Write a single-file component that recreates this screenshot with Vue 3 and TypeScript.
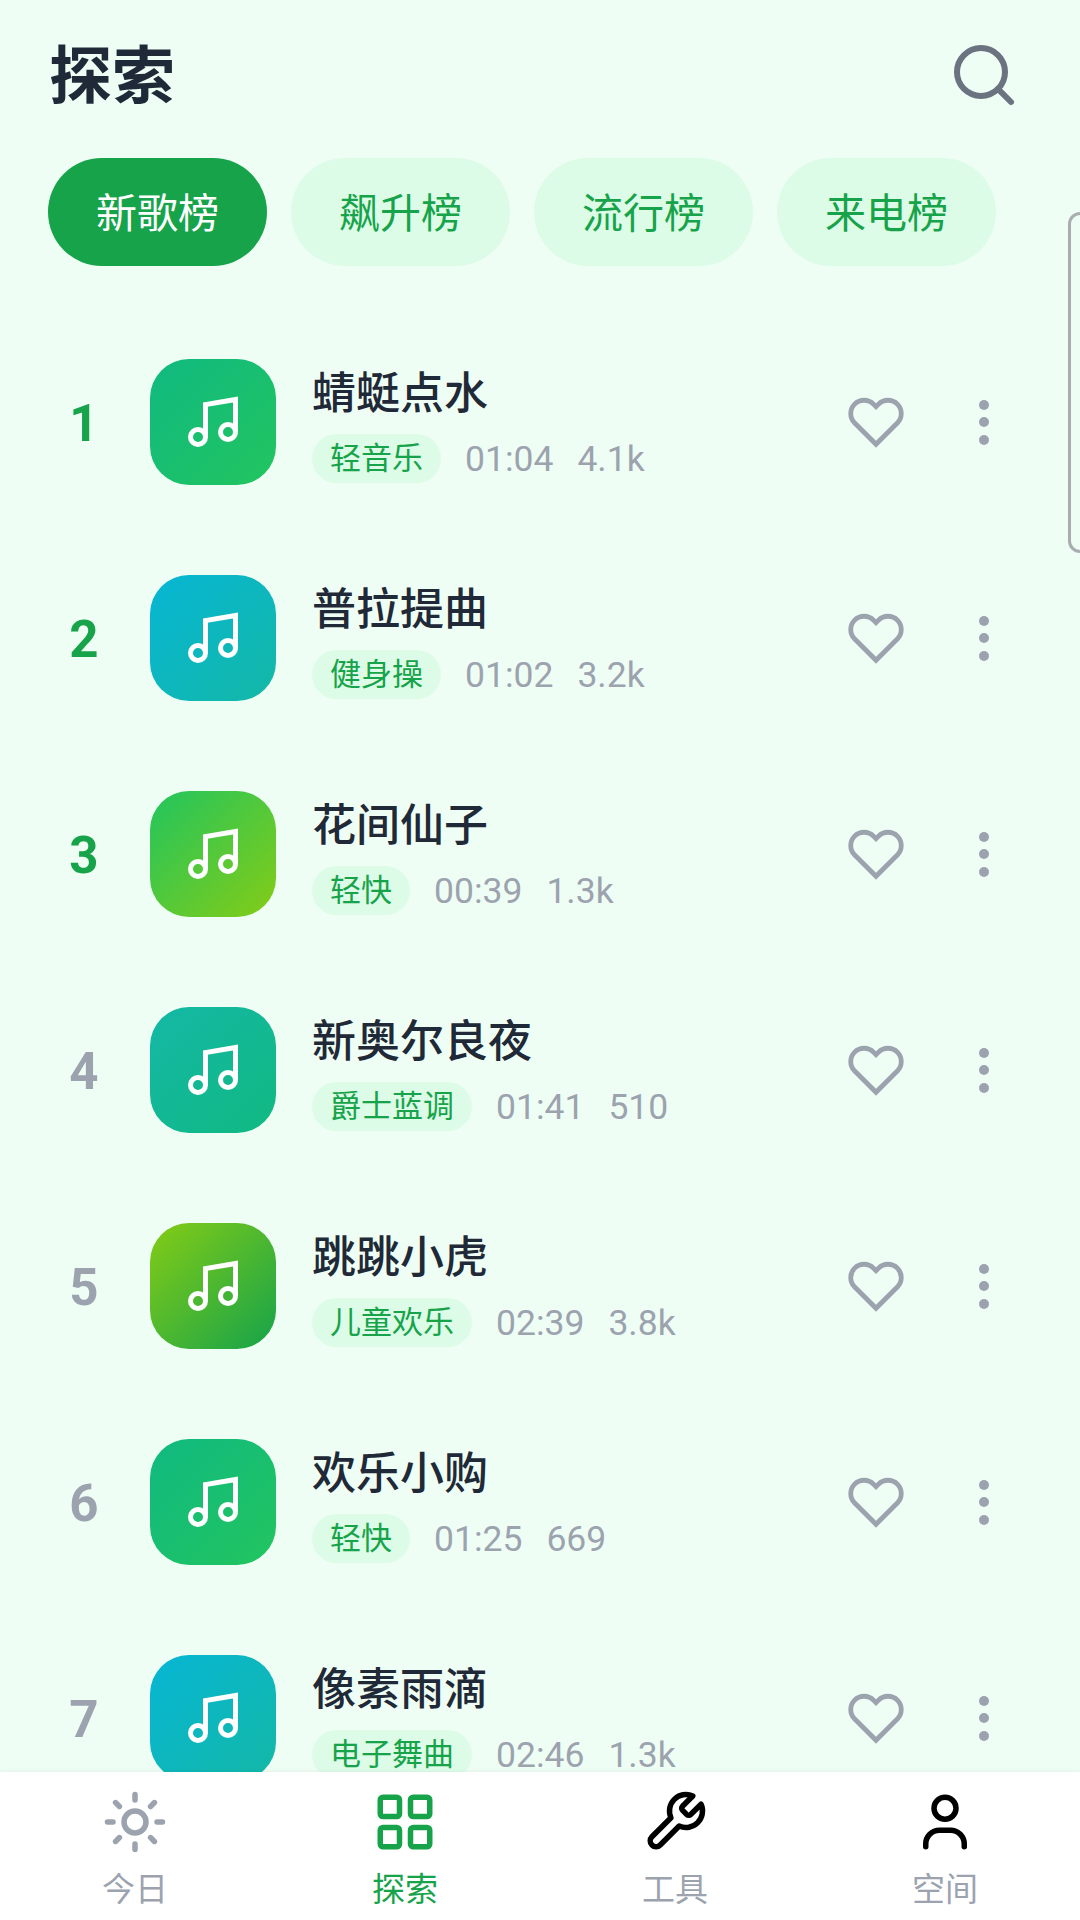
<template>
  <div class="page">
    <header class="top">
      <h1>探索</h1>
      <svg class="search" viewBox="0 0 24 24"><circle cx="11" cy="11" r="8" /><path d="M21 21l-4.35-4.35" /></svg>
    </header>

    <div class="tabs">
      <span v-for="(t, i) in tabs" :key="t" class="tab" :class="{ active: i === 0 }">{{ t }}</span>
    </div>

    <main class="list">
      <div v-for="(s, i) in songs" :key="s.title" class="row">
        <div class="rank" :class="{ hot: i < 3 }">{{ i + 1 }}</div>
        <div class="cover" :class="s.cover">
          <svg viewBox="0 0 24 24"><path d="M9 18V5l12-2v13" /><circle cx="6" cy="18" r="3" /><circle cx="18" cy="16" r="3" /></svg>
        </div>
        <div class="info">
          <div class="title">{{ s.title }}</div>
          <div class="meta">
            <span class="tag">{{ s.tag }}</span>
            <span>{{ s.time }}</span>
            <span>{{ s.plays }}</span>
          </div>
        </div>
        <svg class="heart" viewBox="0 0 24 24"><path d="M20.84 4.61a5.5 5.5 0 0 0-7.78 0L12 5.67l-1.06-1.06a5.5 5.5 0 0 0-7.78 7.78l1.06 1.06L12 21.23l7.78-7.78 1.06-1.06a5.5 5.5 0 0 0 0-7.78z" /></svg>
        <div class="dots"><i></i><i></i><i></i></div>
      </div>
    </main>

    <nav class="nav">
      <div class="nav-item muted">
        <svg viewBox="0 0 24 24"><circle cx="12" cy="12" r="4" /><path d="M12 2v2M12 20v2M4.93 4.93l1.41 1.41M17.66 17.66l1.41 1.41M2 12h2M20 12h2M6.34 17.66l-1.41 1.41M19.07 4.93l-1.41 1.41" /></svg>
        <span>今日</span>
      </div>
      <div class="nav-item current">
        <svg viewBox="0 0 24 24"><rect x="3" y="3" width="7" height="7" rx="1" /><rect x="14" y="3" width="7" height="7" rx="1" /><rect x="3" y="14" width="7" height="7" rx="1" /><rect x="14" y="14" width="7" height="7" rx="1" /></svg>
        <span>探索</span>
      </div>
      <div class="nav-item">
        <svg viewBox="0 0 24 24"><path d="M14.7 6.3a1 1 0 0 0 0 1.4l1.6 1.6a1 1 0 0 0 1.4 0l3.77-3.77a6 6 0 0 1-7.94 7.94l-6.91 6.91a2.12 2.12 0 0 1-3-3l6.91-6.91a6 6 0 0 1 7.94-7.94l-3.76 3.76z" /></svg>
        <span>工具</span>
      </div>
      <div class="nav-item">
        <svg viewBox="0 0 24 24"><circle cx="12" cy="7" r="4" /><path d="M5 21v-1a5 5 0 0 1 5-5h4a5 5 0 0 1 5 5v1" /></svg>
        <span>空间</span>
      </div>
    </nav>

    <div class="edge"></div>
  </div>
</template>

<script setup lang="ts">
interface Song {
  title: string
  tag: string
  time: string
  plays: string
  cover: string
}

const tabs = ['新歌榜', '飙升榜', '流行榜', '来电榜']

const songs: Song[] = [
  { title: '蜻蜓点水', tag: '轻音乐', time: '01:04', plays: '4.1k', cover: 'emerald' },
  { title: '普拉提曲', tag: '健身操', time: '01:02', plays: '3.2k', cover: 'cyan' },
  { title: '花间仙子', tag: '轻快', time: '00:39', plays: '1.3k', cover: 'lime' },
  { title: '新奥尔良夜', tag: '爵士蓝调', time: '01:41', plays: '510', cover: 'teal' },
  { title: '跳跳小虎', tag: '儿童欢乐', time: '02:39', plays: '3.8k', cover: 'forest' },
  { title: '欢乐小购', tag: '轻快', time: '01:25', plays: '669', cover: 'emerald' },
  { title: '像素雨滴', tag: '电子舞曲', time: '02:46', plays: '1.3k', cover: 'cyan' },
]
</script>

<style>
html, body { margin: 0; background: #f0fdf4; }
</style>

<style scoped>
.page {
  position: relative;
  width: 1080px;
  height: 1920px;
  display: flex;
  flex-direction: column;
  overflow: hidden;
  background: #effef4;
  font-family: Roboto, "Noto Sans CJK SC", sans-serif;
}
.top {
  display: flex;
  justify-content: space-between;
  align-items: center;
  height: 150px;
  padding: 0 48px 0 49px;
  box-sizing: border-box;
  flex-shrink: 0;
}
h1 { margin: -10px 0 0; font-size: 63px; font-weight: 700; color: #1f2937; }
.search { width: 72px; height: 72px; fill: none; stroke: #6b7280; stroke-width: 2; stroke-linecap: round; margin-right: 12px; }
.tabs { display: flex; gap: 24px; padding: 8px 48px 0; flex-shrink: 0; }
.tab {
  width: 219px;
  height: 108px;
  padding-bottom: 4px;
  box-sizing: border-box;
  border-radius: 54px;
  display: flex;
  align-items: center;
  justify-content: center;
  font-size: 41px;
  color: #16a34a;
  background: #dcfce7;
}
.tab.active { background: #16a34a; color: #fff; }
.list {
  flex: 1;
  min-height: 0;
  overflow: hidden;
  padding: 93px 48px 0;
  display: flex;
  flex-direction: column;
  gap: 90px;
}
.row { display: flex; align-items: center; height: 126px; flex-shrink: 0; }
.rank { width: 72px; margin-right: 30px; padding-top: 2px; text-align: center; font-size: 51px; font-weight: 700; color: #9ca3af; }
.rank.hot { color: #16a34a; }
.cover {
  width: 126px;
  height: 126px;
  border-radius: 39px;
  display: flex;
  align-items: center;
  justify-content: center;
  flex-shrink: 0;
}
.cover svg { width: 60px; height: 60px; fill: none; stroke: #fff; stroke-width: 2; stroke-linecap: butt; stroke-linejoin: miter; }
.emerald { background: linear-gradient(135deg, #10b981, #22c55e); }
.cyan { background: linear-gradient(135deg, #06b6d4, #14b8a6); }
.lime { background: linear-gradient(135deg, #22c55e, #84cc16); }
.teal { background: linear-gradient(135deg, #14b8a6, #10b981); }
.forest { background: linear-gradient(135deg, #84cc16, #16a34a); }
.info { flex: 1; min-width: 0; margin-left: 36px; padding-top: 2px; display: flex; flex-direction: column; gap: 9px; }
.title { font-size: 44px; line-height: 62px; font-weight: 500; color: #1f2937; }
.meta { display: flex; align-items: center; gap: 24px; font-size: 35.5px; color: #9ca3af; }
.tag {
  height: 49px;
  line-height: 49px;
  padding: 0 18px;
  border-radius: 25px;
  background: #dcfce7;
  color: #16a34a;
  font-size: 31px;
}
.heart { width: 58px; height: 58px; fill: none; stroke: #9ca3af; stroke-width: 2; stroke-linecap: round; stroke-linejoin: miter; margin-right: 74px; }
.dots { width: 10px; display: flex; flex-direction: column; gap: 7.5px; margin-right: 43px; }
.dots i { display: block; width: 10px; height: 10px; border-radius: 50%; background: #9ca3af; }
.nav {
  height: 148px;
  flex-shrink: 0;
  display: grid;
  grid-template-columns: repeat(4, 1fr);
  background: #fff;
  box-shadow: 0 -1px 3px rgba(0, 0, 0, 0.05);
  position: relative;
}
.nav-item { display: flex; flex-direction: column; align-items: center; padding-top: 17px; color: #000; }
.nav-item svg { width: 66px; height: 66px; fill: none; stroke: currentColor; stroke-width: 2; stroke-linecap: round; stroke-linejoin: round; }
.nav-item span { font-size: 33px; line-height: 44px; margin-top: 13px; color: #9ca3af; }
.nav-item.muted { color: #9ca3af; }
.nav-item.current { color: #16a34a; }
.nav-item.current span { color: #16a34a; }
.edge {
  position: absolute;
  left: 1068px;
  top: 212px;
  width: 30px;
  height: 341px;
  box-sizing: border-box;
  border: 3px solid #a8aeb0;
  border-radius: 12px;
}
</style>
